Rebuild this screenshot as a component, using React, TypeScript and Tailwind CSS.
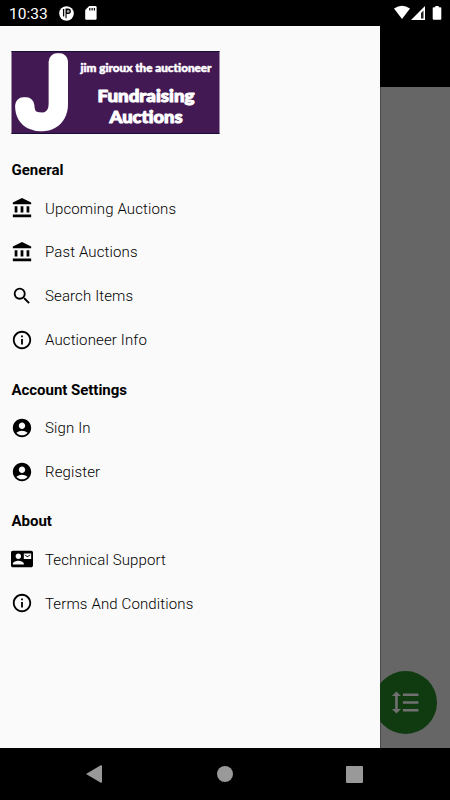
import React from "react";
import type { IconType } from "react-icons";
import {
  MdAccountBalance,
  MdAccountCircle,
  MdContactMail,
  MdFormatLineSpacing,
  MdInfoOutline,
  MdSearch,
} from "react-icons/md";

type MenuItem = { label: string; icon: IconType };

const sections: { title: string; items: MenuItem[] }[] = [
  {
    title: "General",
    items: [
      { label: "Upcoming Auctions", icon: MdAccountBalance },
      { label: "Past Auctions", icon: MdAccountBalance },
      { label: "Search Items", icon: MdSearch },
      { label: "Auctioneer Info", icon: MdInfoOutline },
    ],
  },
  {
    title: "Account Settings",
    items: [
      { label: "Sign In", icon: MdAccountCircle },
      { label: "Register", icon: MdAccountCircle },
    ],
  },
  {
    title: "About",
    items: [
      { label: "Technical Support", icon: MdContactMail },
      { label: "Terms And Conditions", icon: MdInfoOutline },
    ],
  },
];

const StatusBar = () => (
  <header className="flex h-[26px] shrink-0 items-center bg-black pl-[9px] text-white">
    <span className="w-[50px] pt-[3px] text-[15.5px] leading-none">10:33</span>
    <svg width="15" height="15" viewBox="0 0 15 15">
      <circle cx="7.5" cy="7.5" r="7.3" fill="#fff" />
      <path d="M4.6 3v7.5" stroke="#000" strokeWidth="1.3" />
      <path d="M6.5 2.6h2.7a2.7 2.7 0 0 1 0 5.4H7.6v4.2H6.5z" fill="#000" />
      <circle cx="9.2" cy="5.4" r="1.3" fill="#aaa" />
    </svg>
    <svg width="12" height="14" viewBox="0 0 12 14" className="ml-[11px]">
      <path
        d="M4.2 0H10.5Q11.6 0 11.6 1.2V12.6Q11.6 13.8 10.4 13.8H1.4Q.2 13.8 .2 12.6V4z"
        fill="#fff"
      />
      <path d="M4.8 2v2.6M7.1 2v2.6M9.4 2v2.6" stroke="#000" strokeWidth="1.2" />
    </svg>
    <svg width="56" height="26" viewBox="0 0 56 26" className="ml-auto">
      <path d="M0 8.6Q8 2.8 16 8.6L8 19z" fill="#fff" />
      <path d="M31 6v14H17z" fill="#fff" />
      <path d="M29.5 10.5v8h-2.5V13z" fill="#222" />
      <path
        d="M41.3 6h3.4v1.3h1.6q1 0 1 1v10.5q0 1-1 1h-6.6q-1 0-1-1V8.3q0-1 1-1h1.6z"
        fill="#fff"
      />
    </svg>
  </header>
);

const Logo = () => (
  <svg
    width="208"
    height="83"
    viewBox="0 0 208 83"
    className="mt-[25px] ml-[11px] block overflow-visible"
    fontFamily="Lato, sans-serif"
    fontWeight="900"
    fill="#fff"
    stroke="#fff"
    strokeLinejoin="round"
  >
    <rect x=".5" width="208" height="83" fill="#431954" stroke="none" />
    <path d="M.5 .5h208M.5 82.5h208" stroke="#180f38" />
    <text
      transform="translate(8.8 71.2) scale(1.03 1)"
      fontFamily="Roboto, sans-serif"
      fontWeight="100"
      fontSize="85"
      strokeWidth="16.5"
    >
      J
    </text>
    <text x="69.5" y="21" fontSize="11.5" strokeWidth=".5" textLength="131" lengthAdjust="spacingAndGlyphs">
      jim giroux the auctioneer
    </text>
    <text x="86.5" y="51" fontSize="17" strokeWidth="1" textLength="97" lengthAdjust="spacingAndGlyphs">
      Fundraising
    </text>
    <text x="98.5" y="71.5" fontSize="17" strokeWidth="1" textLength="73" lengthAdjust="spacingAndGlyphs">
      Auctions
    </text>
  </svg>
);

const Drawer = () => (
  <aside className="w-[380px] shrink-0 overflow-hidden bg-[#fafafa]">
    <Logo />
    <nav className="mt-[9px]">
      {sections.map((section) => (
        <section key={section.title}>
          <h2 className="flex h-[43.9px] items-center pt-[11px] pl-[11.5px] text-[15px] font-bold tracking-[-0.03px]">
            {section.title}
          </h2>
          <ul>
            {section.items.map(({ label, icon: Icon }) => (
              <li key={label} className="flex h-[43.9px] items-center gap-[11.5px] pl-[11px]">
                <Icon size={22} className="-mt-px" />
                <span className="ml-[0.5px] text-[15px] font-[350] tracking-[0.13px]">{label}</span>
              </li>
            ))}
          </ul>
        </section>
      ))}
    </nav>
  </aside>
);

const NavigationBar = () => (
  <footer className="flex h-[52px] shrink-0 items-center justify-between bg-black pr-[87px] pl-[86px]">
    <svg width="16" height="18" viewBox="0 0 16 18" fill="#999">
      <path d="M0 9 14.8.2Q16 0 16 1v16q0 1-1.2.8z" />
    </svg>
    <div className="ml-[2px] size-4 rounded-full bg-[#999]" />
    <div className="size-[17px] rounded-[1px] bg-[#999]" />
  </footer>
);

export default function App() {
  return (
    <div className="flex h-[800px] w-[450px] flex-col overflow-hidden bg-black font-[Roboto,sans-serif] text-black">
      <StatusBar />
      <main className="flex min-h-0 flex-1">
        <Drawer />
        <div className="flex flex-1 flex-col overflow-hidden">
          <div className="h-[61px] shrink-0 bg-black" />
          <div className="flex flex-1 items-end border-l border-[#4b4b4b] bg-[#666] pb-[14px]">
            <button
              type="button"
              aria-label="Line spacing"
              className="-ml-[7px] flex size-[63px] shrink-0 items-center justify-center rounded-full bg-[#103b10] text-[#707070]"
            >
              <MdFormatLineSpacing size={31} />
            </button>
          </div>
        </div>
      </main>
      <NavigationBar />
    </div>
  );
}
